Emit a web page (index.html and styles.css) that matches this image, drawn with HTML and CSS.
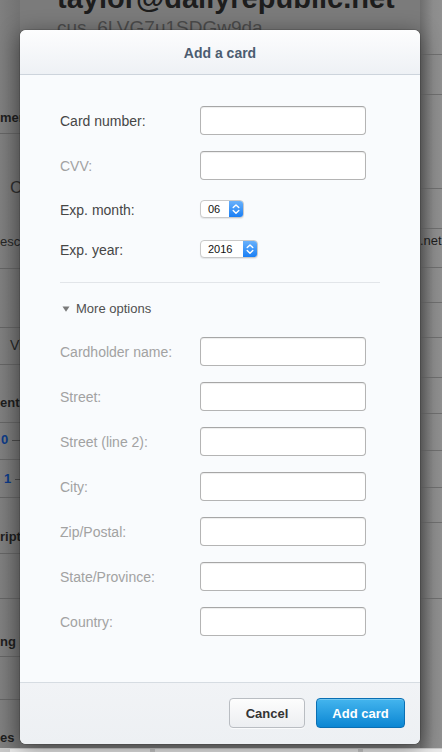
FILE: index.html
```html
<!DOCTYPE html>
<html lang="en">
<head>
<meta charset="utf-8">
<title>Add a card</title>
<link rel="stylesheet" href="styles.css">
</head>
<body>
<div class="page">
  <div class="col-left">
    <div class="lrow r1"><span class="bg-b">mer</span></div>
    <div class="lrow r2"><span class="bg-c">C</span><span class="bg-t esc">esc</span></div>
    <div class="lrow r3"></div>
    <div class="lrow r4"><span class="bg-t vi">Vi</span></div>
    <div class="lrow r5"><span class="bg-b">ents</span></div>
    <div class="lrow r6"><span class="bg-blue">0</span><span class="dash"></span></div>
    <div class="lrow r7"><span class="bg-blue one">1</span><span class="dash"></span></div>
    <div class="lrow r8"><span class="bg-b">ript</span></div>
    <div class="lrow r9"></div>
    <div class="lrow r10"><span class="bg-b">ng I</span></div>
    <div class="lrow r11"></div>
    <div class="lrow r12"><span class="bg-b">es</span></div>
  </div>
  <div class="col-main">
    <div class="email">taylor@dailyrepublic.net</div>
    <div class="cus">cus_6LVG7u1SDGw9da</div>
  </div>
  <div class="col-right">
    <div class="rrow q1"></div>
    <div class="rrow q2"></div>
    <div class="rrow q3"></div>
    <div class="rrow q4"></div>
    <div class="rrow q5"><span class="bg-t net">.net</span></div>
    <div class="rrow q6"></div>
    <div class="rrow q7"></div>
    <div class="rrow q8"></div>
    <div class="rrow q9"></div>
    <div class="rrow q10"></div>
    <div class="rrow q11"></div>
    <div class="rrow q12"></div>
    <div class="rrow q13"></div>
  </div>
</div>
<div class="page-foot">
  <div class="pf-box pf1"></div>
  <div class="pf-box pf2"></div>
  <div class="pf-box pf3"></div>
</div>

<div class="modal">
  <div class="modal-head">Add a card</div>
  <div class="modal-body">
    <div class="field">
      <label class="lbl">Card number:</label>
      <div class="input"></div>
    </div>
    <div class="field f-cvv">
      <label class="lbl opt">CVV:</label>
      <div class="input"></div>
    </div>
    <div class="field f-sel f-month">
      <label class="lbl">Exp. month:</label>
      <div class="select s-month"><span class="sel-val">06</span><span class="stepper"><svg width="14" height="16" viewBox="0 0 14 16"><path d="M4.2 6.6 L7 3.9 L9.8 6.6" fill="none" stroke="#fff" stroke-width="1.4" stroke-linecap="round" stroke-linejoin="round"/><path d="M4.2 9.6 L7 12.3 L9.8 9.6" fill="none" stroke="#fff" stroke-width="1.4" stroke-linecap="round" stroke-linejoin="round"/></svg></span></div>
    </div>
    <div class="field f-sel">
      <label class="lbl">Exp. year:</label>
      <div class="select s-year"><span class="sel-val">2016</span><span class="stepper"><svg width="14" height="16" viewBox="0 0 14 16"><path d="M4.2 6.6 L7 3.9 L9.8 6.6" fill="none" stroke="#fff" stroke-width="1.4" stroke-linecap="round" stroke-linejoin="round"/><path d="M4.2 9.6 L7 12.3 L9.8 9.6" fill="none" stroke="#fff" stroke-width="1.4" stroke-linecap="round" stroke-linejoin="round"/></svg></span></div>
    </div>
    <div class="sep"></div>
    <div class="more"><svg class="tri" width="8" height="6" viewBox="0 0 8 6"><polygon points="0.5,0.5 7.5,0.5 4,5.8" fill="#7a7a7a"/></svg>More options</div>
    <div class="opts">
      <div class="field"><label class="lbl opt">Cardholder name:</label><div class="input"></div></div>
      <div class="field"><label class="lbl opt">Street:</label><div class="input"></div></div>
      <div class="field"><label class="lbl opt">Street (line 2):</label><div class="input"></div></div>
      <div class="field"><label class="lbl opt">City:</label><div class="input"></div></div>
      <div class="field"><label class="lbl opt">Zip/Postal:</label><div class="input"></div></div>
      <div class="field"><label class="lbl opt">State/Province:</label><div class="input"></div></div>
      <div class="field last"><label class="lbl opt">Country:</label><div class="input"></div></div>
    </div>
  </div>
  <div class="modal-foot">
    <button class="btn btn-cancel">Cancel</button>
    <button class="btn btn-primary">Add card</button>
  </div>
</div>
</body>
</html>
```

FILE: styles.css
```css
* { box-sizing: border-box; }
html, body { margin: 0; padding: 0; }
body {
  width: 442px;
  height: 752px;
  overflow: hidden;
  background: #7c7c7c;
  font-family: "Liberation Sans", Arial, Helvetica, sans-serif;
  position: relative;
}

/* ---------- dimmed background page ---------- */
.page {
  display: flex;
  height: 748px;
}
.col-left {
  width: 20px;
  flex: none;
  background: linear-gradient(to right, #7f7f7f, #727272);
}
.lrow {
  border-bottom: 1px solid #646464;
  width: 20px;
  white-space: nowrap;
  font-size: 13px;
  line-height: 16px;
  color: #1e1e1e;
}
.r1 { height: 134px; padding-top: 110px; }
.r2 { height: 135px; padding-top: 45px; }
.r3 { height: 59px; }
.r4 { height: 37px; padding-top: 9px; }
.r5 { height: 58px; padding-top: 30px; }
.r6 { height: 37px; padding-top: 9px; }
.r7 { height: 38px; padding-top: 11px; }
.r8 { height: 56px; padding-top: 31px; }
.r9 { height: 45px; }
.r10 { height: 58px; padding-top: 35px; }
.r11 { height: 43px; }
.r12 { height: 48px; border-bottom: none; padding-top: 30px; }

.bg-b { font-weight: bold; display: block; }
.bg-t { display: block; }
.bg-c { display: block; font-size: 17px; color: #2e2e2e; padding-left: 10px; line-height: 18px; }
.esc { margin-top: 37px; color: #262626; }
.vi { padding-left: 10px; color: #262626; font-size: 14px; }
.bg-blue {
  font-weight: bold;
  color: #0c3a86;
  display: inline-block;
  padding-left: 1px;
}
.bg-blue.one { padding-left: 4px; }
.dash {
  display: inline-block;
  width: 9px;
  height: 1px;
  background: #4a4a4a;
  vertical-align: middle;
  margin-left: 4px;
}

.col-main {
  flex: 1;
  padding-left: 37px;
  overflow: hidden;
  background: #7b7b7b;
}
.email {
  font-size: 29px;
  font-weight: bold;
  line-height: 30px;
  margin-top: -17px;
  color: #1d1d1d;
  white-space: nowrap;
}
.cus {
  font-size: 19px;
  line-height: 22px;
  margin-top: 4px;
  color: #4c4c4c;
  white-space: nowrap;
}

.col-right {
  width: 22px;
  flex: none;
  background: linear-gradient(to right, #6e6e6e, #8c8c8c 60%, #909090);
}
.rrow {
  border-bottom: 1px solid #6f6f6f;
  font-size: 13px;
  line-height: 16px;
  color: #1e1e1e;
  white-space: nowrap;
}
.q1 { height: 55px; }
.q2 { height: 40px; }
.q3 { height: 94px; }
.q4 { height: 40px; }
.q5 { height: 39px; padding-top: 4px; }
.q6 { height: 35px; }
.q7 { height: 35px; }
.q8 { height: 40px; }
.q9 { height: 36px; }
.q10 { height: 37px; }
.q11 { height: 37px; }
.q12 { height: 35px; }
.q13 { height: 76px; }

.page-foot {
  height: 4px;
  background: #c9c9c9;
  display: flex;
  gap: 5px;
  padding-top: 1px;
}
.pf-box { background: #e9e9e9; height: 3px; }
.pf1 { width: 140px; margin-left: 10px; }
.pf2 { width: 203px; }
.pf3 { flex: 1; }

/* ---------- modal ---------- */
.modal {
  position: absolute;
  left: 20px;
  top: 30px;
  width: 400px;
  height: 714px;
  background: #f9fbfd;
  border-radius: 6px;
  box-shadow: 0 0 0 1px rgba(0,0,0,0.12), 0 4px 22px rgba(0,0,0,0.45);
  overflow: hidden;
  display: flex;
  flex-direction: column;
}
.modal-head {
  height: 45px;
  flex: none;
  border-bottom: 1px solid #cdd4dc;
  background: linear-gradient(#fdfdfe, #eef1f5);
  color: #4b5c70;
  font-size: 14px;
  font-weight: bold;
  display: flex;
  align-items: center;
  justify-content: center;
  padding-top: 1px;
}
.modal-body {
  flex: 1;
  padding: 31px 40px 46px 40px;
}
.field {
  display: flex;
  align-items: center;
  height: 29px;
  margin-bottom: 16px;
}
.field.f-cvv { margin-bottom: 20px; }
.field.f-sel { height: 18px; }
.field.f-month { margin-bottom: 22px; }
.field.last { margin-bottom: 0; }
.lbl {
  width: 140px;
  flex: none;
  font-size: 14px;
  color: #464646;
  padding-top: 1px;
}
.lbl.opt { color: #a2a2a2; }
.input {
  width: 166px;
  height: 29px;
  background: #fff;
  border: 1px solid #b4b4b4;
  border-top-color: #a6a6a6;
  border-radius: 4px;
  box-shadow: inset 0 1px 1px rgba(0,0,0,0.07);
}
.select {
  height: 18px;
  display: flex;
  align-items: stretch;
  background: #fff;
  border: 1px solid #c9c9c9;
  border-radius: 4px;
  box-shadow: 0 1px 1px rgba(0,0,0,0.08);
  overflow: hidden;
}
.s-month { width: 44px; }
.s-year { width: 58px; }
.sel-val {
  flex: 1;
  font-size: 11px;
  line-height: 16px;
  color: #111;
  padding-left: 7px;
}
.stepper {
  width: 14px;
  flex: none;
  background: linear-gradient(#69b1fb, #1a7ff5);
  display: flex;
  align-items: center;
  justify-content: center;
}
.stepper svg { display: block; }
.sep {
  height: 1px;
  background: #e2e5e9;
  margin-top: 24px;
}
.more {
  margin-top: 18px;
  height: 16px;
  font-size: 13px;
  line-height: 16px;
  color: #505050;
  display: flex;
  align-items: center;
}
.tri {
  display: block;
  margin-left: 2px;
  margin-right: 6px;
  margin-top: -1px;
}
.opts { margin-top: 20px; }

.modal-foot {
  flex: none;
  height: 62px;
  border-top: 1px solid #d6dce2;
  background: linear-gradient(#f1f3f6, #edf0f3);
  display: flex;
  justify-content: flex-end;
  align-items: flex-start;
  gap: 11px;
  padding: 15px 15px 0 0;
}
.btn {
  height: 30px;
  border-radius: 4px;
  font-family: "Liberation Sans", Arial, Helvetica, sans-serif;
  font-size: 13px;
  font-weight: bold;
  padding: 0;
  cursor: pointer;
}
.btn-cancel {
  width: 76px;
  color: #333;
  background: linear-gradient(#fdfdfd, #eceef1);
  border: 1px solid #b9bdc2;
  box-shadow: 0 1px 0 rgba(255,255,255,0.7);
}
.btn-primary {
  width: 89px;
  color: #fff;
  background: linear-gradient(#44b5ee, #0b86d3);
  border: 1px solid #0a6fb3;
  box-shadow: inset 0 1px 0 rgba(255,255,255,0.25);
}
```
